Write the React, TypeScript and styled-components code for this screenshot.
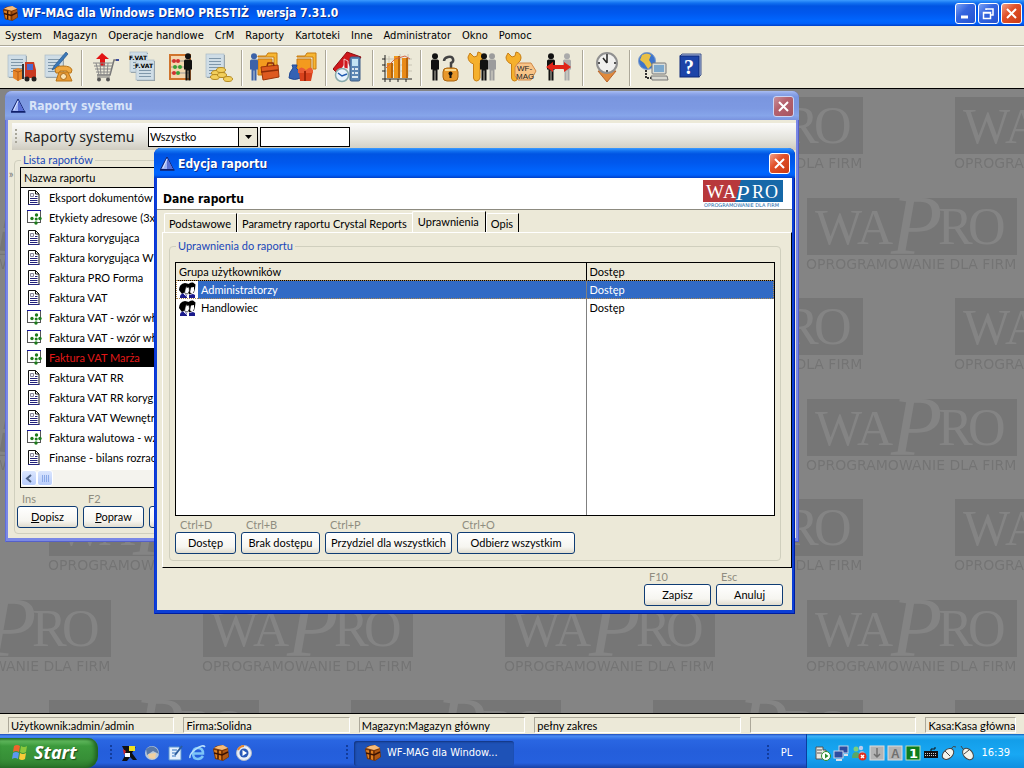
import React from 'react';
import styled, { createGlobalStyle, css } from 'styled-components';

const listFont = 'Lato, "Liberation Sans", Arial, sans-serif';
const menuFont = '"DejaVu Sans Condensed", "DejaVu Sans", Tahoma, sans-serif';
const face = '#ece9d8';

const Global = createGlobalStyle`
  *, *::before, *::after { box-sizing: border-box; }
  body { margin: 0; background: #848484; font-family: ${listFont}; font-size: 11px; color: #000; }
  button, input, select { font: inherit; color: inherit; margin: 0; }
`;

/* ---------- shell ---------- */

const Shell = styled.div`
  display: flex;
  flex-direction: column;
  min-height: 100vh;
  overflow: hidden;
`;

const activeTitle = 'linear-gradient(#3c9bff 0, #1171f0 3px, #0054e3 6px, #0058ee 50%, #0066ff 80%, #0061fb 90%, #0040c8 100%)';
const idleTitle = 'linear-gradient(#a9bdf2 0, #8ba4e8 3px, #7a96df 6px, #7d99e2 60%, #86a5ea 85%, #7a93df 100%)';

const AppTitle = styled.header`
  display: flex;
  align-items: center;
  gap: 3px;
  height: 26px;
  padding: 0 2px 0 2px;
  background: ${activeTitle};
`;

const TitleText = styled.h1<{ $idle?: boolean }>`
  flex: 1;
  margin: 0;
  font: bold 12px/16px ${menuFont};
  color: ${p => (p.$idle ? '#d8e4f8' : '#fff')};
  text-shadow: ${p => (p.$idle ? 'none' : '1px 1px 0 #0f2f8c')};
  white-space: pre;
`;

const Caption = styled.div`
  display: flex;
  gap: 2px;
`;

const CaptionButton = styled.button<{ $kind: 'blue' | 'red' | 'idle' }>`
  display: flex;
  align-items: center;
  justify-content: center;
  width: 21px;
  height: 21px;
  padding: 0;
  border: 1px solid ${p => (p.$kind === 'idle' ? '#cbd5f4' : '#fff')};
  border-radius: 3px;
  background: ${p =>
    p.$kind === 'blue'
      ? 'linear-gradient(135deg, #7aa2f5, #3566e0 40%, #2452d0)'
      : p.$kind === 'red'
        ? 'linear-gradient(135deg, #f0a088, #e2512a 40%, #c93a14)'
        : 'linear-gradient(135deg, #c9909a, #b5626e 40%, #a6545f)'};
`;

const MenuBar = styled.nav`
  display: flex;
  align-items: center;
  gap: 11px;
  height: 20px;
  padding: 0 5px;
  background: ${face};
  border-bottom: 1px solid #aca899;
`;

const MenuLink = styled.a`
  color: #000;
  text-decoration: none;
  font: 11px/14px ${menuFont};
`;

const ToolBar = styled.div`
  display: flex;
  align-items: center;
  height: 43px;
  padding: 0 2px;
  background: ${face};
  border-top: 1px solid #fff;
  border-bottom: 1px solid #000;
`;

const ToolButton = styled.button`
  width: 38px;
  height: 36px;
  padding: 1px 3px 3px;
  border: 0;
  background: none;
  svg { display: block; }
`;

const ToolSep = styled.span<{ $wide?: boolean }>`
  width: 2px;
  height: 36px;
  margin: 0 ${p => (p.$wide ? 4 : 3)}px;
  border-left: 1px solid #aca899;
  border-right: 1px solid #fff;
`;

const Desktop = styled.main`
  position: relative;
  flex: 1;
  min-height: 624px;
  background: #848484;
`;

const Wallpaper = styled.svg`
  position: absolute;
  inset: 0;
  width: 100%;
  height: 100%;
`;

/* ---------- windows ---------- */

const Window = styled.section<{ $x: number; $y: number; $w: number; $idle?: boolean }>`
  position: absolute;
  left: ${p => p.$x}px;
  top: ${p => p.$y}px;
  width: ${p => p.$w}px;
  display: flex;
  flex-direction: column;
  padding: 0 3px 4px;
  border-radius: 7px 7px 0 0;
  background: ${p => (p.$idle ? '#7a88e6' : '#0c3fd6')};
  box-shadow: inset 1px 0 ${p => (p.$idle ? '#5f6fd8' : '#0831d9')},
    inset -1px -1px ${p => (p.$idle ? '#5560c8' : '#001ea0')};
`;

const WindowTitle = styled.header<{ $idle?: boolean }>`
  display: flex;
  align-items: center;
  gap: 3px;
  height: ${p => (p.$idle ? 29 : 30)}px;
  margin: 0 -3px;
  padding: 1px 5px 0 5px;
  border-radius: 7px 7px 0 0;
  background: ${p => (p.$idle ? idleTitle : activeTitle)};
`;

const Body = styled.div`
  display: flex;
  flex-direction: column;
  flex: 1;
  background: ${face};
`;

const FilterStrip = styled.div`
  display: flex;
  align-items: center;
  gap: 2px;
  height: 27px;
  margin: 3px 0 0 4px;
  padding-left: 3px;
  background: linear-gradient(#fbfbfa, #e4e3dc 60%, #cfccc0);
`;

const Grip = styled.span<{ $tone: string; $gap: number }>`
  width: 2px;
  height: 16px;
  margin-right: ${p => p.$gap}px;
  background: repeating-linear-gradient(${p => p.$tone} 0 2px, transparent 2px 4px);
`;

const StripLabel = styled.label`
  width: 122px;
  font: 14px/20px "Noto Sans", Verdana, sans-serif;
  color: #222;
`;

const SelectWrap = styled.span`
  position: relative;
  width: 110px;
  height: 20px;
`;

const FilterSelect = styled.select`
  appearance: none;
  width: 100%;
  height: 100%;
  padding: 0 20px 0 1px;
  border: 1px solid #000;
  border-radius: 0;
  background: #fff;
`;

const SelectArrow = styled.span`
  position: absolute;
  top: 0;
  right: 0;
  width: 20px;
  height: 20px;
  display: flex;
  align-items: center;
  justify-content: center;
  border: 1px solid #000;
  background: ${face};
  pointer-events: none;
`;

const FilterInput = styled.input`
  width: 90px;
  height: 20px;
  padding: 0 3px;
  border: 1px solid #000;
  border-radius: 0;
  background: #fff;
`;

const Columns = styled.div`
  display: flex;
  padding: 3px 0 4px;
`;

const Expander = styled.button`
  align-self: flex-start;
  width: 6px;
  height: 14px;
  margin-top: 14px;
  padding: 0;
  border: 0;
  background: none;
  color: #777;
  line-height: 14px;
`;

const Group = styled.fieldset<{ $pad: string; $margin: string }>`
  flex: 1;
  min-width: 0;
  margin: ${p => p.$margin};
  padding: ${p => p.$pad};
  border: 1px solid #d0cfbe;
  border-radius: 4px;
`;

const Legend = styled.legend`
  margin-left: 1px;
  padding: 0 2px;
  color: #1a48b8;
  line-height: 14px;
`;

const ListBox = styled.div`
  height: 321px;
  display: flex;
  flex-direction: column;
  border: 1px solid #000;
  background: #fff;
  overflow: hidden;
`;

const ReportTable = styled.table`
  width: 100%;
  border-collapse: collapse;
  th {
    height: 19px;
    padding: 0 3px;
    text-align: left;
    font-weight: normal;
    background: ${face};
    border-bottom: 1px solid #000;
  }
  td { height: 20px; padding: 0; white-space: nowrap; }
`;

const IconCell = styled.td`
  width: 25px;
  svg { display: block; margin-left: 6px; }
`;

const ReportName = styled.span<{ $on?: boolean }>`
  display: block;
  height: 19px;
  padding-left: 3px;
  line-height: 19px;
  ${p => p.$on && css`background: #000; color: #e01818;`}
`;

const ScrollTrack = styled.div`
  display: flex;
  height: 17px;
  margin-top: auto;
  background: #f4f3ee;
`;

const ScrollPart = styled.button`
  width: 16px;
  height: 16px;
  padding: 0;
  display: flex;
  align-items: center;
  justify-content: center;
  border: 1px solid #fff;
  border-radius: 3px;
  background: linear-gradient(#dbe6fe, #b9cdfb);
`;

const Actions = styled.div<{ $align?: string }>`
  display: flex;
  gap: 5px;
  justify-content: ${p => p.$align || 'flex-start'};
`;

const Action = styled.div<{ $w: number }>`
  display: flex;
  flex-direction: column;
  width: ${p => p.$w}px;
`;

const Hint = styled.kbd`
  height: 14px;
  padding-left: 5px;
  font: 11px/14px ${listFont};
  color: #8f8d80;
`;

const PushButton = styled.button`
  height: 22px;
  padding: 0;
  border: 1px solid #0f3c74;
  border-radius: 3px;
  background: linear-gradient(#fff, #f6f5f0 70%, #e0dccf);
  line-height: 18px;
  white-space: nowrap;
`;

/* ---------- dialog ---------- */

const DialogHead = styled.div`
  display: flex;
  align-items: flex-start;
  justify-content: space-between;
  height: 32px;
  padding: 2px 9px 0 6px;
  background: #fff;
  border-bottom: 1px solid #8d8b80;
`;

const DialogHeading = styled.h2`
  margin: 11px 0 0;
  font: bold 12px/16px ${menuFont};
`;

const TabRow = styled.div`
  display: flex;
  align-items: flex-end;
  height: 22px;
  padding-left: 7px;
`;

const Tab = styled.button<{ $on?: boolean; $edge?: boolean }>`
  height: ${p => (p.$on ? 21 : 19)}px;
  padding: ${p => (p.$on ? '0 6px 2px 5px' : '0 5px 0 4px')};
  border: 0;
  border-top: 1px solid #fff;
  border-left: 1px solid #fff;
  border-right: ${p => (p.$edge ? '1px solid #000' : '0')};
  border-radius: 2px 0 0 0;
  background: ${face};
  line-height: 15px;
  white-space: nowrap;
`;

const TabPanel = styled.div`
  display: flex;
  margin-left: 5px;
  padding: 6px 10px 6px 6px;
  border: 1px solid #fff;
  border-right: 1px solid #000;
  border-bottom: 1px solid #000;
`;

const GridBox = styled.div`
  height: 254px;
  margin-bottom: 2px;
  border: 1px solid #000;
  background: #fff;
`;

const Grid = styled.table`
  width: 100%;
  height: 100%;
  border-collapse: collapse;
  table-layout: fixed;
  th, td { padding: 1px 3px 0; text-align: left; font-weight: normal; line-height: 14px; }
  th { height: 17px; background: ${face}; border-bottom: 1px solid #000; }
  th:first-child { width: 410px; border-right: 1px solid #000; }
  td:first-child { border-right: 1px solid #808080; padding: 0; }
`;

const GridRow = styled.tr<{ $on?: boolean }>`
  height: 18px;
  ${p => p.$on && css`
    color: #fff;
    background: #316ac5;
    outline: 1px dotted #b08a50;
    outline-offset: -1px;
  `}
`;

const GridName = styled.span`
  display: flex;
  align-items: center;
  gap: 3px;
`;

const UserCell = styled.span`
  display: flex;
  width: 22px;
  height: 18px;
  align-items: center;
  justify-content: center;
  background: #fff;
`;

const Footer = styled.div`
  padding: 2px 9px 4px;
`;

/* ---------- bottom bars ---------- */

const StatusBar = styled.footer`
  display: flex;
  gap: 9px;
  height: 21px;
  padding: 3px 8px 1px;
  background: ${face};
  border-top: 1px solid #000;
`;

const StatusCell = styled.span<{ $grow: number }>`
  flex: ${p => p.$grow} 1 0;
  min-width: 0;
  padding: 0 2px;
  overflow: hidden;
  white-space: nowrap;
  line-height: 15px;
  border: 1px solid;
  border-color: #aca899 #fff #fff #aca899;
`;

const TaskBar = styled.div`
  display: flex;
  align-items: center;
  height: 34px;
  padding-top: 4px;
  background: linear-gradient(#1c49b8 0, #4a8cf4 2px, #2a66e2 6px, #245edb 50%, #2560de 85%, #1941a5 100%);
`;

const StartButton = styled.button`
  display: flex;
  align-items: center;
  gap: 5px;
  width: 98px;
  height: 30px;
  margin-right: 12px;
  padding: 0 0 2px 11px;
  border: 0;
  border-radius: 0 10px 12px 0;
  background: linear-gradient(#2f7d2f 0, #5fb85c 3px, #3c9a3c 8px, #378f37 70%, #2c772c 100%);
  box-shadow: inset -3px 0 4px #1f5f1f;
  color: #fff;
  font: italic bold 18px/22px "Noto Sans", sans-serif;
  text-shadow: 1px 1px 1px #1c4a1c;
`;

const QuickLaunch = styled.div`
  display: flex;
  flex: 0 0 226px;
  gap: 5px;
`;

const QuickButton = styled.button`
  width: 18px;
  height: 18px;
  padding: 0;
  border: 0;
  background: none;
  svg { display: block; }
`;

const TaskButton = styled.button`
  display: flex;
  align-items: center;
  gap: 5px;
  width: 160px;
  height: 25px;
  padding: 0 10px;
  border: 0;
  border-radius: 3px;
  background: #1e52b7;
  box-shadow: inset 1px 1px 2px #12337c;
  color: #fff;
  font: 11px/14px ${menuFont};
`;

const LangButton = styled.button`
  width: 24px;
  margin-right: 8px;
  padding: 0;
  border: 0;
  background: none;
  color: #fff;
  font: 11px/14px ${menuFont};
`;

const Tray = styled.div`
  display: flex;
  align-items: center;
  gap: 2px;
  height: 34px;
  margin-top: -4px;
  padding: 4px 14px 0 8px;
  border-left: 1px solid #0a3e9e;
  background: linear-gradient(#0c59b9 0, #3cb4f8 2px, #139ee9 6px, #18a8f4 60%, #0f8fe0 100%);
  color: #fff;
  font: 11px/14px ${menuFont};
  svg { display: block; }
  time { margin-left: 4px; }
`;

const Spacer = styled.span`
  flex: 1;
`;

/* ---------- drawings ---------- */

const Sheet = ({ x, y, w = 18, h = 22 }: { x: number; y: number; w?: number; h?: number }) => (
  <g>
    <rect x={x + 1} y={y + 1} width={w} height={h} fill="#8f9aa0" />
    <rect x={x} y={y} width={w} height={h} fill="#cfdde6" stroke="#a9bac6" strokeWidth=".7" />
    {Array.from({ length: Math.floor((h - 5) / 3) }, (_, i) => (
      <rect key={i} x={x + 3} y={y + 4 + i * 3} width={w - 6} height="1" fill="#7f97aa" />
    ))}
  </g>
);

const Man = ({ x, c }: { x: number; c: string }) => (
  <g fill={c}>
    <circle cx={x + 5} cy="5.2" r="3" />
    <path d={`M${x + 1} 10q0-1.500 1.500-1.500h5q1.500 0 1.500 1.500v8.500h-1.500v11h-2.100v-10h-.8v10h-2.100v-11h-1.500z`} />
  </g>
);

const Folder = ({ x }: { x: number }) => (
  <g>
    <path d={`M${x} 5h8l2-3h9v16h-3v-12h-16z`} fill="#f7b733" stroke="#c77a10" />
    <path d={`M${x} 8h14v16h-14z`} fill="#f39a1e" stroke="#c77a10" />
  </g>
);

const Wrench = () => (
  <path d="M3 2l4 4 3-1 1-4q5 1 5 6 0 3-3 5v15q-1 3-3.500 3t-3-3V13Q1 11 1 6z" fill="#f5b02c" stroke="#c87f14" />
);

const icons: Record<string, React.ReactNode> = {
  delivery: <>
    <Sheet x={3} y={4} />
    <path d="M8 19l5-2 6 2v8l-6 3-5-3z" fill="#e8862a" /><path d="M8 19l5 2v9M13 21l6-2" stroke="#b45a12" fill="none" />
    <path d="M20 11h9l2 8v8h-11z" fill="#c93a22" /><rect x="22" y="13" width="6" height="6" fill="#4c6ad0" />
    <path d="M18 13v15" stroke="#333" strokeWidth="2" /><circle cx="22" cy="28" r="2.500" fill="#222" /><circle cx="29" cy="28" r="2.500" fill="#222" />
  </>,
  phone: <>
    <Sheet x={2} y={4} />
    <path d="M23 1l-12 14-2 4 4-2 12-14z" fill="#3a78b8" stroke="#1e4a80" strokeWidth=".6" />
    <path d="M12 19q0-4 8-4t9 4l-1 3h-4v-2h-7v2h-4z" fill="#f0a840" stroke="#b87418" />
    <path d="M16 21h9l4 9h-16z" fill="#e89a34" stroke="#b87418" /><circle cx="20.500" cy="25.500" r="3" fill="#fbe3b4" stroke="#a8681c" />
  </>,
  cart: <>
    <path d="M13 2l-6 6h4v7h5V8h4z" fill="#e21414" />
    <path d="M28 9h-3l-4 15h-13" fill="none" stroke="#777" strokeWidth="1.500" /><rect x="27" y="8" width="3" height="2" fill="#3c4c9c" />
    <path d="M4 12h20M5 15h18M6 18h16M7 21h15M7 12l3 12M11 12l1 12M15 12v12M19 12l-1 12" stroke="#888" fill="none" />
    <path d="M8 26h13" stroke="#777" /><circle cx="10" cy="28.500" r="2" fill="#555" /><circle cx="19" cy="28.500" r="2" fill="#555" />
  </>,
  vat: <>
    <Sheet x={3} y={1} w={17} h={20} /><Sheet x={9} y={9} w={18} h={20} />
    <rect x="3" y="3" width="18" height="6" fill="#cfdde6" /><rect x="9" y="11" width="18" height="7" fill="#cfdde6" />
    <text x="2" y="9" fontSize="6" fontWeight="bold" fontFamily="DejaVu Sans">F.VAT</text>
    <text x="8" y="17" fontSize="6" fontWeight="bold" fontFamily="DejaVu Sans">F.VAT</text>
  </>,
  abacus: <>
    <rect x="5" y="4" width="20" height="24" fill="#f4d7b0" stroke="#d0742c" strokeWidth="2" />
    <path d="M6 10h18M6 16h18M6 22h18" stroke="#999" />
    <g fill="#d03030"><circle cx="9" cy="10" r="2" /><circle cx="13" cy="10" r="2" /><circle cx="9" cy="22" r="2" /></g>
    <g fill="#38a038"><circle cx="10" cy="16" r="2" /><circle cx="15" cy="16" r="2" /><circle cx="13" cy="22" r="2" /></g>
    <Man x={18} c="#111" />
  </>,
  coins: <>
    <Sheet x={3} y={3} w={18} h={23} />
    <g fill="#f2cf5c" stroke="#b58a20"><ellipse cx="13" cy="22" rx="4.500" ry="2.500" /><ellipse cx="18" cy="19" rx="4.500" ry="2.500" /><ellipse cx="12" cy="26" rx="4.500" ry="2.500" /><ellipse cx="19" cy="24" rx="4.500" ry="2.500" /><ellipse cx="25" cy="28" rx="4.500" ry="2.500" /></g>
  </>,
  briefcase: <>
    <Folder x={9} /><Man x={0} c="#3c62a8" />
    <path d="M12 16l17-2 1 12-16 3z" fill="#dd5a20" stroke="#9c3408" /><path d="M18 15l1-3h5l1 3M12 21l17-2" stroke="#8c2c08" strokeWidth="1.500" fill="none" />
  </>,
  parcels: <>
    <Folder x={10} />
    <path d="M5 14h5l-1 3q6 5 5 10-7 3-12 0 0-6 4-10z" fill="#3462b4" stroke="#234a94" />
    <path d="M12 20h14l-2 10h-11z" fill="#d8421c" /><path d="M11 19q3-5 8 0 5-5 7 0v3h-15z" fill="#ea5c34" /><path d="M18 20v10" stroke="#9c2408" strokeWidth="2" />
  </>,
  house: <>
    <path d="M0 18L14 1l14 5-10 14-4-8L5 23z" fill="#d0181c" stroke="#8c0c10" /><path d="M5 22l9-12 4 8v11H6z" fill="#f0f0f0" /><path d="M11 8l4 2v8l-4-1z" fill="#d0181c" stroke="#fff" strokeWidth=".7" />
    <rect x="17" y="6" width="10" height="24" rx="1.500" fill="#5c86b4" stroke="#3c5c84" /><rect x="19" y="8" width="6" height="7" fill="#c4e4f4" />
    <g fill="#dce8f0"><rect x="19" y="17" width="2" height="2" /><rect x="22" y="17" width="3" height="2" /><rect x="19" y="21" width="2" height="2" /><rect x="22" y="21" width="3" height="2" /><rect x="19" y="25" width="6" height="2" /></g>
    <circle cx="9" cy="24" r="6.500" fill="#e8f2fc" stroke="#8aa" strokeWidth="1.500" /><path d="M5 22l4 3 5-2" stroke="#205ab0" strokeWidth="1.500" fill="none" />
  </>,
  chart: <>
    <path d="M3 8h28M3 14h28M3 20h28M8 5v22M19 3v22M27 3v22" stroke="#c8c4b4" /><path d="M4 4v24h27M1 8h3M1 14h3M1 20h3M9 28v3M17 28v3M25 28v3M1 28h3v3" stroke="#222" fill="none" />
    <rect x="6" y="12" width="6" height="15" fill="#e88a18" /><rect x="13" y="5" width="6" height="22" fill="#f0981c" /><rect x="21" y="7" width="6" height="20" fill="#e88a18" />
    <path d="M11 12v15M18 5v22M26 7v20" stroke="#b86408" strokeWidth="2" /><path d="M5 17l9-9 10-3 5 3" stroke="#d46848" fill="none" />
  </>,
  unlock: <>
    <Man x={1} c="#111" />
    <path d="M22 18v-6q3-1 2-4-1-3-5-2-4 1-4 4" fill="none" stroke="#444" strokeWidth="2.500" />
    <rect x="14" y="17" width="15" height="13" rx="4" fill="#e8982a" stroke="#a86410" /><path d="M16 19h11" stroke="#fbd88c" strokeWidth="2" /><circle cx="21.500" cy="22.500" r="2" fill="#111" /><path d="M21.500 23v4" stroke="#111" strokeWidth="2" />
  </>,
  service: <><Man x={20} c="#9c9c9c" /><Wrench /><Man x={12} c="#111" /></>,
  wfmag: <>
    <Wrench />
    <path d="M13 12h13l5 8-5 9h-13l-3-4V16z" fill="#f8c488" stroke="#d08848" />
    <text x="12" y="20" fontSize="8" fontFamily="Liberation Sans" fill="#222">WF-</text>
    <text x="11" y="28" fontSize="8" fontFamily="Liberation Sans" fill="#222">MAG</text>
  </>,
  swap: <>
    <Man x={3} c="#111" /><Man x={19} c="#aaa" />
    <path d="M3 16l7-5v3h11v-3l7 5-7 5v-3h-11v3z" fill="#e02418" />
  </>,
  clock: <>
    <path d="M7 20h18l-9 11z" fill="#e08a3c" stroke="#b8642c" /><circle cx="16" cy="12" r="10" fill="#f0f0ee" stroke="#909090" strokeWidth="2" />
    <path d="M16 12l-4-5M16 12V5" stroke="#222" strokeWidth="1.500" /><g fill="#555"><rect x="15" y="3" width="2" height="2" /><rect x="15" y="19" width="2" height="2" /><rect x="7" y="11" width="2" height="2" /><rect x="23" y="11" width="2" height="2" /></g>
  </>,
  network: <>
    <circle cx="10" cy="10" r="8.500" fill="#3c74cc" stroke="#7c9ccc" /><path d="M5 4q5-3 9 0l-2 5 3 5-4 4-4-6-4-3z" fill="#e8c048" />
    <path d="M9 19v8h8" stroke="#333" strokeWidth="2" strokeDasharray="2 1" fill="none" />
    <rect x="15" y="12" width="14" height="11" rx="1" fill="#d8dcd8" stroke="#777" /><rect x="17" y="14" width="10" height="7" fill="#7ca8cc" /><path d="M14 25h16l1 4h-16z" fill="#d8d8d0" stroke="#777" />
  </>,
  help: <>
    <path d="M5 5l2-2h19v21l-2 2z" fill="#a8b8e0" stroke="#44588c" /><rect x="5" y="5" width="19" height="21" fill="#1d44a8" stroke="#0c2878" />
    <text x="9" y="23" fontSize="20" fontFamily="Liberation Serif" fontWeight="bold" fill="#fff">?</text>
  </>,
};

const Icon = ({ name }: { name: string }) => (
  <svg width="32" height="32" viewBox="0 0 32 32" aria-hidden="true">{icons[name]}</svg>
);

const Crate = ({ size = 18 }: { size?: number }) => (
  <svg width={size} height={size} viewBox="0 0 18 18" aria-hidden="true">
    <path d="M1 5l3-3 6-1 6 3 1 9-6 4-8-2z" fill="#7c3808" />
    <path d="M2 4l4-2 5-1 5 3-6 2z" fill="#f8bc78" /><path d="M2 6l7 1v9l-5-2z" fill="#e08020" /><path d="M11 7l5-2v8l-5 3z" fill="#b05814" />
    <path d="M2 9l8 2 6-3M6 6v9" stroke="#3c1404" strokeWidth="1.500" fill="none" />
  </svg>
);

const Prism = () => (
  <svg width="16" height="16" viewBox="0 0 16 16" aria-hidden="true">
    <path d="M8 1L1.500 13.500h13z" fill="#9eb2f4" stroke="#10206c" /><path d="M8 2v11h6z" fill="#5a70d4" /><path d="M1 14h14.500" stroke="#10206c" strokeWidth="1.500" /><path d="M8 3L4 12" stroke="#dce6ff" />
  </svg>
);

const Cross = () => (
  <svg width="13" height="13" viewBox="0 0 13 13" aria-hidden="true"><path d="M2 2l9 9M11 2l-9 9" stroke="#fff" strokeWidth="2" /></svg>
);

const DocIcon = () => (
  <svg width="13" height="15" viewBox="0 0 13 15" aria-hidden="true">
    <path d="M1.500 .5h7l3.500 3.500v10.500h-10.500z" fill="#fff" stroke="#111" /><path d="M8.500 .5v3.500h3.500" fill="none" stroke="#111" />
    <path d="M3.500 3.500h3v3h-3z" fill="#eef" stroke="#889" /><path d="M8 6.500h2.500M3 8.500h7.500M3 10.500h7.500M3 12.500h7.500" stroke="#23237c" />
    <path d="M1 14.500h11.500" stroke="#23237c" />
  </svg>
);

const FormIcon = () => (
  <svg width="15" height="16" viewBox="0 0 15 16" aria-hidden="true">
    <rect x=".5" y="1.500" width="13" height="12" fill="#fff" stroke="#555" /><path d="M0 1.500h14" stroke="#1414a0" />
    <g fill="#1c7c1c"><circle cx="9.500" cy="6" r="1.700" /><circle cx="5" cy="9.500" r="1.700" /><circle cx="9.200" cy="10" r="1.500" /><circle cx="13" cy="9.500" r="1.700" /><circle cx="9" cy="14" r="1.700" /></g>
  </svg>
);

const UsersIcon = () => (
  <svg width="17" height="16" viewBox="0 0 17 16" aria-hidden="true">
    <path d="M8 4q2-4 6-3.500l2.500 2-.5 4-1 4-5 2z" fill="#000" /><path d="M12 5.500l3-.5v4l-1.500 2.500-2.500-1z" fill="#fff" /><path d="M10 13l4-1 2 1v3h-6z" fill="#1a1a8c" />
    <path d="M0 8q0-6 6-7l4 1 .5 2-3.500 1-1 5-3 2z" fill="#000" /><path d="M6.500 6l3.500-1 .5 4-2 3-3-1z" fill="#fff" stroke="#000" strokeWidth=".6" /><path d="M1 15q0-3 3-3.500l4 1.500v3H1z" fill="#1a1a8c" /><path d="M5 12l3 2.500" stroke="#fff" />
  </svg>
);

const Logo = () => (
  <svg width="80" height="28" viewBox="0 0 80 28" role="img" aria-label="WAPRO">
    <rect width="80" height="22" fill="#1668a8" /><path d="M0 0h38l-6 22H0z" fill="#b8383c" />
    <g fill="#fff" fontFamily="Liberation Serif">
      <text x="3" y="18" fontSize="19">W</text><text x="20" y="18" fontSize="18">A</text>
      <text x="33" y="20" fontSize="22" fontStyle="italic">P</text>
      <text x="49" y="18" fontSize="18">R</text><text x="62" y="18" fontSize="18">O</text>
    </g>
    <text x="1" y="27" fontSize="5" fontFamily="DejaVu Sans" fill="#1668a8">OPROGRAMOWANIE DLA FIRM</text>
  </svg>
);

const Mark = ({ x, y }: { x: number; y: number }) => (
  <g transform={`translate(${x} ${y})`}>
    <rect width="210" height="57" fill="#767676" />
    <g fill="#848484" fontFamily="Liberation Serif">
      <text x="8" y="46" fontSize="50">W</text><text x="50" y="46" fontSize="50">A</text>
      <text x="84" y="56" fontSize="84" fontStyle="italic">P</text>
      <text x="131" y="46" fontSize="52">R</text><text x="161" y="46" fontSize="52">O</text>
    </g>
    <text x="-1" y="71" fontSize="14" fontFamily="DejaVu Sans" fill="#747474">OPROGRAMOWANIE DLA FIRM</text>
  </g>
);

const quick: React.ReactNode[] = [
  <><path d="M2 2h8v5l6-4-4 6 5 7h-4l-3-3-3 4H2l4-7z" fill="#111" /><path d="M9 2h6v5H9z" fill="#f0e020" /><path d="M5 9h5v4H5z" fill="#fff" /><path d="M3 5l3 2-2 4z" fill="#d82020" /></>,
  <><circle cx="9" cy="9" r="7" fill="#b8c8d8" /><path d="M3 5q6-5 11 0l2 5-6-3-6 4z" fill="#5878a8" /><path d="M5 10l8-1-1 6-6-1z" fill="#f0d0a0" /></>,
  <><path d="M3 3h10l2 2v11H3z" fill="#e4f0fc" stroke="#5c94d0" /><path d="M6 6h5M6 9h5M6 12h4" stroke="#3070c0" /><path d="M16 2l-7 9" stroke="#2c5c9c" strokeWidth="2" /></>,
  <><path d="M14 12q-2 3-5 3-5 0-5-5.500T9 4q5 0 5 5.500H5" fill="none" stroke="#7cc4f8" strokeWidth="2.500" /><path d="M1 14q-1-4 6-9t9-2" fill="none" stroke="#b8e0fc" strokeWidth="1.500" /></>,
  null,
  <><circle cx="9" cy="9" r="7.500" fill="#e8eef8" stroke="#b0b8c8" strokeWidth="1" /><path d="M3 6q2-4 6-4" stroke="#e88830" strokeWidth="2" fill="none" /><circle cx="9" cy="9" r="4.500" fill="#2858b8" /><path d="M7.500 6l4.500 3-4.500 3z" fill="#fff" /></>,
];

const tray: React.ReactNode[] = [
  <><path d="M1 2h7v3h3v9H1z" fill="#e8e8e0" stroke="#555" /><path d="M2 5h5M2 8h5" stroke="#555" /><circle cx="11" cy="11" r="4.500" fill="#fff" stroke="#2c8c2c" /><path d="M10 8.500l3.500 2.500-3.500 2.500z" fill="#2c8c2c" /></>,
  <><rect x="6" y="1" width="9" height="7" fill="#2c4ca0" stroke="#c8d4e8" /><rect x="1" y="6" width="9" height="7" fill="#2c4ca0" stroke="#c8d4e8" /><path d="M3 15h6M11 10h4" stroke="#d8e0ec" strokeWidth="2" /></>,
  <><circle cx="5" cy="4" r="2.500" fill="#7cd07c" /><path d="M1 13q0-6 4-6t4 6z" fill="#58a868" /><circle cx="10" cy="3" r="2.200" fill="#bce" /><path d="M8 10q0-4 3-4t3 4z" fill="#9bd" /><circle cx="11.500" cy="11.500" r="4" fill="#e03020" /><path d="M10 10l3 3M13 10l-3 3" stroke="#fff" strokeWidth="1.500" /></>,
  <><rect x="1" y="1" width="14" height="14" fill="#b4b4b4" stroke="#ddd" /><path d="M8 3v9M5 9l3 3 3-3" stroke="#707070" strokeWidth="1.500" fill="none" /></>,
  <><rect x="1" y="1" width="14" height="14" fill="#b4b4b4" stroke="#ddd" /><text x="4" y="13" fontSize="12" fontWeight="bold" fontFamily="Liberation Sans" fill="#707070">A</text></>,
  <><rect x="1" y="1" width="14" height="14" fill="#0c7c1c" stroke="#bdb" /><text x="4" y="13" fontSize="13" fontWeight="bold" fontFamily="DejaVu Sans" fill="#fff">1</text></>,
  <><path d="M1 6h14v7H1z" fill="#111" /><path d="M2 8.500h12M2 10.500h12" stroke="#ccc" strokeDasharray="1 1" /><path d="M8 6V4h4V2" stroke="#111" fill="none" /></>,
  <><ellipse cx="7" cy="9" rx="6.500" ry="4.500" transform="rotate(-40 7 9)" fill="#f4f4ec" stroke="#444" /><path d="M10 4q2-4 5-2M4 6l5 5" stroke="#444" fill="none" /></>,
  <><ellipse cx="9" cy="9" rx="4.500" ry="6.500" transform="rotate(-40 9 9)" fill="#f4f4ec" stroke="#444" /><path d="M4 4L2 1M5 9l5-4" stroke="#444" fill="none" /></>,
];

/* ---------- data ---------- */

const menu = ['System', 'Magazyn', 'Operacje handlowe', 'CrM', 'Raporty', 'Kartoteki', 'Inne', 'Administrator', 'Okno', 'Pomoc'];

const tools = ['delivery', 'phone', '|', 'cart', 'vat', 'abacus', 'coins', '|', 'briefcase', 'parcels', '|', 'house', '||', 'chart', '||', 'unlock', 'service', 'wfmag', 'swap', '||', 'clock', '|', 'network', 'help'];

const reports: { name: string; form?: boolean; on?: boolean }[] = [
  { name: 'Eksport dokumentów d' },
  { name: 'Etykiety adresowe (3x', form: true },
  { name: 'Faktura korygująca' },
  { name: 'Faktura korygująca W' },
  { name: 'Faktura PRO Forma' },
  { name: 'Faktura VAT' },
  { name: 'Faktura VAT - wzór wł', form: true },
  { name: 'Faktura VAT - wzór wł', form: true },
  { name: 'Faktura VAT Marża', form: true, on: true },
  { name: 'Faktura VAT RR' },
  { name: 'Faktura VAT RR koryg' },
  { name: 'Faktura VAT Wewnętr' },
  { name: 'Faktura walutowa - wz', form: true },
  { name: 'Finanse - bilans rozrac' },
];

const grants = [
  { key: 'Ctrl+D', label: 'Dostęp', w: 61 },
  { key: 'Ctrl+B', label: 'Brak dostępu', w: 79 },
  { key: 'Ctrl+P', label: 'Przydziel dla wszystkich', w: 127 },
  { key: 'Ctrl+O', label: 'Odbierz wszystkim', w: 118 },
];

const status = [
  { text: 'Użytkownik:admin/admin', grow: 167 },
  { text: 'Firma:Solidna', grow: 167 },
  { text: 'Magazyn:Magazyn główny', grow: 167 },
  { text: 'pełny zakres', grow: 209 },
  { text: '', grow: 167 },
  { text: 'Kasa:Kasa główna', grow: 88 },
];

/* ---------- page ---------- */

const ReportsWindow = () => (
  <Window $x={5} $y={2} $w={794} $idle>
    <WindowTitle $idle>
      <Prism />
      <TitleText as="h2" $idle>Raporty systemu</TitleText>
      <CaptionButton $kind="idle" aria-label="Zamknij"><Cross /></CaptionButton>
    </WindowTitle>
    <Body>
      <FilterStrip>
        <Grip $tone="#a8a69a" $gap={5} />
        <StripLabel htmlFor="kind">Raporty systemu</StripLabel>
        <SelectWrap>
          <FilterSelect id="kind"><option>Wszystko</option></FilterSelect>
          <SelectArrow><svg width="7" height="4" aria-hidden="true"><path d="M0 0h7L3.500 4z" /></svg></SelectArrow>
        </SelectWrap>
        <FilterInput aria-label="Raporty systemu" />
      </FilterStrip>
      <Columns>
        <Expander>»</Expander>
        <Group $pad="0 5px 5px 5px" $margin="0 5px 0 0">
          <Legend>Lista raportów</Legend>
          <ListBox>
            <ReportTable>
              <thead><tr><th colSpan={2}>Nazwa raportu</th></tr></thead>
              <tbody>
                {reports.map((r, i) => (
                  <tr key={i}>
                    <IconCell>{r.form ? <FormIcon /> : <DocIcon />}</IconCell>
                    <td><ReportName $on={r.on}>{r.name}</ReportName></td>
                  </tr>
                ))}
              </tbody>
            </ReportTable>
            <ScrollTrack>
              <ScrollPart aria-label="W lewo"><svg width="8" height="9"><path d="M6 1L2 4.500 6 8" fill="none" stroke="#4d6185" strokeWidth="2" /></svg></ScrollPart>
              <ScrollPart aria-label="Suwak"><svg width="9" height="7"><path d="M1.500 0v7M3.500 0v7M5.500 0v7M7.500 0v7" stroke="#8caae8" /></svg></ScrollPart>
            </ScrollTrack>
          </ListBox>
          <ListActions>
            <Action $w={61}><Hint>Ins</Hint><PushButton><u>D</u>opisz</PushButton></Action>
            <Action $w={61}><Hint>F2</Hint><PushButton><u>P</u>opraw</PushButton></Action>
            <Action $w={61}><Hint /><PushButton /></Action>
          </ListActions>
        </Group>
      </Columns>
    </Body>
  </Window>
);

const ListActions = styled(Actions)`
  margin: 4px 0 0 -3px;
`;

const ReportDialog = () => (
  <Window $x={154} $y={59} $w={641}>
    <WindowTitle>
      <Prism />
      <TitleText as="h2">Edycja raportu</TitleText>
      <CaptionButton $kind="red" aria-label="Zamknij"><Cross /></CaptionButton>
    </WindowTitle>
    <Body>
      <DialogHead>
        <DialogHeading>Dane raportu</DialogHeading>
        <Logo />
      </DialogHead>
      <TabRow>
        <Tab $edge>Podstawowe</Tab>
        <Tab>Parametry raportu Crystal Reports</Tab>
        <Tab $on $edge>Uprawnienia</Tab>
        <Tab $edge>Opis</Tab>
      </TabRow>
      <TabPanel>
        <Group $pad="9px 5px 6px 5px" $margin="0">
          <Legend>Uprawnienia do raportu</Legend>
          <GridBox>
            <Grid>
              <thead><tr><th>Grupa użytkowników</th><th>Dostęp</th></tr></thead>
              <tbody>
                {['Administratorzy', 'Handlowiec'].map((n, i) => (
                  <GridRow key={n} $on={i === 0}>
                    <td><GridName><UserCell><UsersIcon /></UserCell>{n}</GridName></td>
                    <td>Dostęp</td>
                  </GridRow>
                ))}
                <tr><td /><td /></tr>
              </tbody>
            </Grid>
          </GridBox>
          <Actions>
            {grants.map(g => (
              <Action key={g.key} $w={g.w}><Hint>{g.key}</Hint><PushButton>{g.label}</PushButton></Action>
            ))}
          </Actions>
        </Group>
      </TabPanel>
      <Footer>
        <Actions $align="flex-end">
          <Action $w={67}><Hint>F10</Hint><PushButton>Zapisz</PushButton></Action>
          <Action $w={67}><Hint>Esc</Hint><PushButton>Anuluj</PushButton></Action>
        </Actions>
      </Footer>
    </Body>
  </Window>
);

export default function App() {
  return (
    <Shell>
      <Global />
      <AppTitle>
        <Crate size={17} />
        <TitleText>{'WF-MAG dla Windows DEMO PRESTIŻ  wersja 7.31.0'}</TitleText>
        <Caption>
          <CaptionButton $kind="blue" aria-label="Minimalizuj"><svg width="13" height="13"><path d="M2 10h7" stroke="#fff" strokeWidth="3" /></svg></CaptionButton>
          <CaptionButton $kind="blue" aria-label="Przywróć"><svg width="13" height="13"><path d="M4 3V2h7v6h-2M1.500 5.500h7v6h-7zM1 6h8" fill="none" stroke="#fff" strokeWidth="1.500" /></svg></CaptionButton>
          <CaptionButton $kind="red" aria-label="Zamknij"><Cross /></CaptionButton>
        </Caption>
      </AppTitle>
      <MenuBar>{menu.map(m => <MenuLink key={m} href="#">{m}</MenuLink>)}</MenuBar>
      <ToolBar>
        {tools.map((t, i) =>
          t[0] === '|' ? <ToolSep key={i} $wide={t === '||'} /> : <ToolButton key={i} aria-label={t}><Icon name={t} /></ToolButton>,
        )}
      </ToolBar>
      <Desktop>
        <Wallpaper aria-hidden="true">
          <defs>
            <pattern id="marks" width="302" height="201" patternUnits="userSpaceOnUse">
              <Mark x={49} y={8} />
              <Mark x={203} y={109} />
              <Mark x={-99} y={109} />
            </pattern>
          </defs>
          <rect width="100%" height="100%" fill="url(#marks)" />
        </Wallpaper>
        <ReportsWindow />
        <ReportDialog />
      </Desktop>
      <StatusBar>{status.map((s, i) => <StatusCell key={i} $grow={s.grow}>{s.text}</StatusCell>)}</StatusBar>
      <TaskBar>
        <StartButton>
          <svg width="18" height="18" viewBox="0 0 18 18" aria-hidden="true">
            <path d="M3 3q3-2 6 0l-1 6q-3-2-6 0z" fill="#f0642c" /><path d="M10 3q3 2 6 0l-1 6q-3 2-6 0z" fill="#8cc83c" />
            <path d="M2 10q3-2 6 0l-1 6q-3-2-6 0z" fill="#5c98f0" /><path d="M9 10q3 2 6 0l-1 6q-3 2-6 0z" fill="#f8cc38" />
          </svg>
          Start
        </StartButton>
        <Grip $tone="#123c9c" $gap={8} />
        <QuickLaunch>
          {quick.map((q, i) => (
            <QuickButton key={i} aria-label={`${i + 1}`}>
              {q ? <svg width="18" height="18" viewBox="0 0 18 18">{q}</svg> : <Crate />}
            </QuickButton>
          ))}
        </QuickLaunch>
        <Grip $tone="#123c9c" $gap={6} />
        <TaskButton><Crate size={18} />WF-MAG dla Window...</TaskButton>
        <Spacer />
        <Grip $tone="#123c9c" $gap={5} />
        <LangButton>PL</LangButton>
        <Tray>
          {tray.map((t, i) => <svg key={i} width="16" height="16" viewBox="0 0 16 16" aria-hidden="true">{t}</svg>)}
          <time>16:39</time>
        </Tray>
      </TaskBar>
    </Shell>
  );
}
